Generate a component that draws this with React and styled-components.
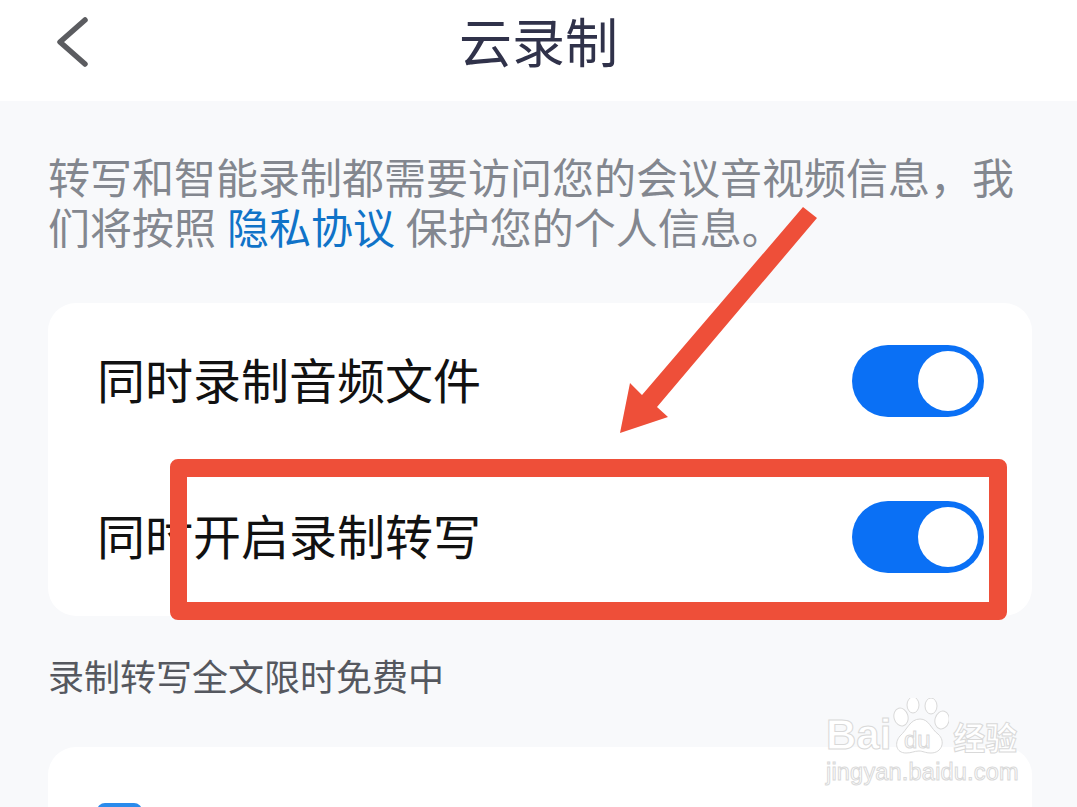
import styled, { createGlobalStyle } from "styled-components";

const FONT = `"Noto Sans CJK SC", "Noto Sans", sans-serif`;

const Global = createGlobalStyle`
  html, body {
    margin: 0;
    padding: 0;
    background: #f8f9fb;
  }
  body {
    font-family: ${FONT};
    overflow: hidden;
  }
`;

const Page = styled.div`
  position: relative;
  width: 1077px;
  height: 807px;
  overflow: hidden;
  background: #f8f9fb;
`;

const NavBar = styled.header`
  height: 101px;
  background: #fff;
  display: flex;
  align-items: center;
  justify-content: center;
  position: relative;
`;

const BackIcon = styled.svg`
  position: absolute;
  left: 54px;
  top: 14px;
`;

const Title = styled.h1`
  margin: 0 0 21px;
  font-size: 53px;
  line-height: 60px;
  font-weight: 400;
  color: #30324a;
`;

const Intro = styled.p`
  margin: 0;
  padding: 50px 40px 0 48px;
  font-size: 42px;
  line-height: 50px;
  word-spacing: 1.5px;
  color: #83878f;
`;

const PolicyLink = styled.span`
  color: #1073c8;
`;

const Card = styled.section`
  margin: 52px 45px 0 48px;
  height: 313px;
  background: #fff;
  border-radius: 28px;
  display: flex;
  flex-direction: column;
`;

const Row = styled.div`
  height: 156px;
  display: flex;
  align-items: center;
  justify-content: space-between;
  padding: 0 48px 0 50px;
`;

const RowLabel = styled.span`
  margin: 0 0 6px -1px;
  font-size: 48px;
  color: #111;
`;

const Toggle = styled.span`
  width: 132px;
  height: 72px;
  border-radius: 36px;
  background: #0a70f5;
  display: flex;
  align-items: center;
  justify-content: flex-end;
  padding-right: 6px;
  box-sizing: border-box;
`;

const Knob = styled.span`
  width: 60px;
  height: 60px;
  border-radius: 50%;
  background: #fff;
`;

const Note = styled.p`
  margin: 33px 0 0 48px;
  font-size: 36px;
  line-height: 52px;
  color: #55585f;
`;

const BottomCard = styled.section`
  margin: 46px 45px 0 48px;
  height: 120px;
  background: #fff;
  border-radius: 28px 28px 0 0;
  padding: 56px 0 0 49px;
  display: flex;
  align-items: flex-start;
  gap: 16px;
`;

const CheckBox = styled.span`
  width: 45px;
  height: 45px;
  border-radius: 8px;
  background: #2a8bec;
`;

const BottomLabel = styled.span`
  font-size: 48px;
  line-height: 48px;
  color: #222;
`;

const Annotation = styled.svg`
  position: absolute;
  left: 0;
  top: 0;
  pointer-events: none;
`;

const Highlight = styled.div`
  position: absolute;
  left: 170px;
  top: 459px;
  width: 837px;
  height: 161px;
  box-sizing: border-box;
  border: 18px solid #ee4f39;
  border-left-width: 17px;
  border-radius: 8px;
`;

const Watermark = styled.div`
  position: absolute;
  left: 826px;
  top: 688px;
  width: 195px;
  color: #fff;
  -webkit-text-stroke: 1px #d9d9d9;
  display: flex;
  flex-direction: column;
`;

const MarkTop = styled.div`
  display: flex;
  align-items: flex-end;
  height: 72px;
  font-family: "Liberation Sans", sans-serif;
  font-size: 42px;
  line-height: 50px;
  font-weight: 700;
`;

const MarkCn = styled.span`
  font-family: ${FONT};
  font-size: 32px;
  line-height: 48px;
  margin-left: 62px;
  white-space: nowrap;
`;

const MarkUrl = styled.div`
  font-family: "Liberation Sans", sans-serif;
  font-size: 23.5px;
  line-height: 24px;
  letter-spacing: 0.2px;
  white-space: nowrap;
`;

const Paw = styled.svg`
  position: absolute;
  left: 67px;
  top: 10px;
`;

const MarkDu = styled.span`
  position: absolute;
  left: 78px;
  top: 40px;
  font-family: "Liberation Sans", sans-serif;
  font-size: 24px;
  line-height: 24px;
`;

function Switch() {
  return (
    <Toggle>
      <Knob />
    </Toggle>
  );
}

export default function App() {
  return (
    <Page>
      <Global />
      <NavBar>
        <BackIcon width="36" height="56" viewBox="0 0 36 56">
          <path
            d="M31 6 L6 28 L31 50"
            fill="none"
            stroke="#5b5c60"
            strokeWidth="5.5"
            strokeLinecap="round"
            strokeLinejoin="round"
          />
        </BackIcon>
        <Title>云录制</Title>
      </NavBar>
      <Intro>
        转写和智能录制都需要访问您的会议音视频信息，我们将按照 <PolicyLink>隐私协议</PolicyLink> 保护您的个人信息。
      </Intro>
      <Card>
        <Row>
          <RowLabel>同时录制音频文件</RowLabel>
          <Switch />
        </Row>
        <Row>
          <RowLabel>同时开启录制转写</RowLabel>
          <Switch />
        </Row>
      </Card>
      <Note>录制转写全文限时免费中</Note>
      <BottomCard>
        <CheckBox />
        <BottomLabel>智能录制</BottomLabel>
      </BottomCard>

      <Annotation width="1077" height="807" viewBox="0 0 1077 807">
        <path
          d="M803 207 L817 218 L657 407 L668 417 L620 433 L630 383 L642 395 Z"
          fill="#ee4f39"
        />
      </Annotation>
      <Highlight />
      <Watermark>
        <Paw width="56" height="58" viewBox="0 0 56 58">
          <g fill="#fff" stroke="#d9d9d9" strokeWidth="1">
            <ellipse cx="8" cy="19" rx="7" ry="9" transform="rotate(-15 8 19)" />
            <ellipse cx="20" cy="7" rx="6" ry="8" />
            <ellipse cx="38" cy="8" rx="6" ry="8" />
            <ellipse cx="49" cy="22" rx="7" ry="9" transform="rotate(15 49 22)" />
            <path d="M27 21 C36 21 38 31 45 36 C53 43 49 55 38 55 C32 55 30 53 26 53 C21 53 19 55 13 55 C3 55 1 45 7 38 C14 32 17 21 27 21 Z" />
          </g>
        </Paw>
        <MarkDu>du</MarkDu>
        <MarkTop>
          Bai
          <MarkCn>经验</MarkCn>
        </MarkTop>
        <MarkUrl>jingyan.baidu.com</MarkUrl>
      </Watermark>
    </Page>
  );
}
